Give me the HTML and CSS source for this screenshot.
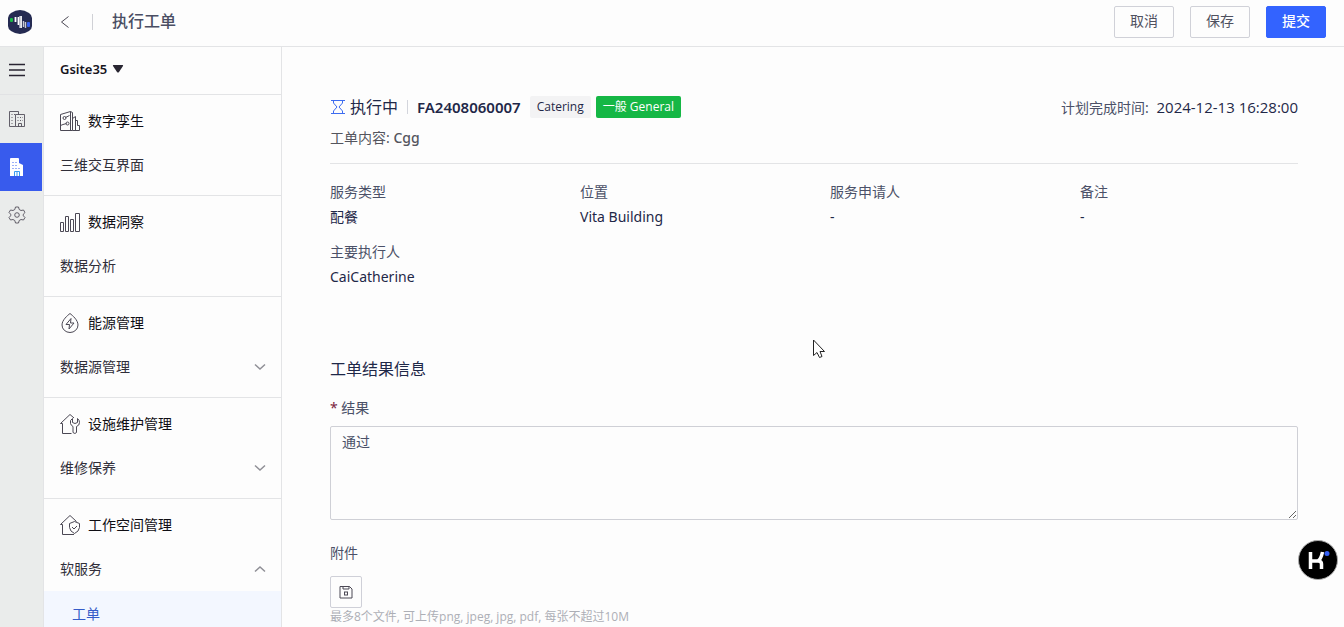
FILE: index.html
```
<!DOCTYPE html>
<html lang="zh-CN">
<head>
  <meta charset="UTF-8" />
  <meta name="viewport" content="width=device-width, initial-scale=1.0" />
  <title>执行工单</title>
  <link rel="stylesheet" href="styles.css">
</head>
<body>
  <header class="topbar">
    <svg class="logo" width="24" height="24" viewBox="0 0 24 24">
      <path d="M3 3Q12-3 21 3Q24 5 24 8V16Q24 19 21 21Q12 27 3 21Q0 19 0 16V8Q0 5 3 3Z" fill="#252b52" />
      <rect x="2" y="8" width="3" height="4" rx="1" fill="#16b845" />
      <path d="M7.500 7V12M10.500 7V15M13 6V18" stroke="#fff" stroke-width="1.800" />
      <path d="M12 6V18M15.500 11V17M17.500 12V18" stroke="#c9cbd6" stroke-width="1.400" />
      <rect x="19" y="12" width="3" height="5" rx="1" fill="#3560f5" />
    </svg>
    <button class="back" type="button" aria-label="返回">
      <svg width="10" height="14" viewBox="0 0 10 14"><path d="M8.500 1.500L1.500 7L8.500 12.500" /></svg>
    </button>
    <h1>执行工单</h1>
    <div class="actions">
      <button class="btn" type="button">取消</button>
      <button class="btn" type="button">保存</button>
      <button class="btn btn-primary" type="submit" form="resultForm">提交</button>
    </div>
  </header>

  <div class="layout">
    <nav class="rail">
      <button class="rail-item rail-menu" type="button" aria-label="菜单">
        <svg width="18" height="14" viewBox="0 0 18 14"><path d="M1 1.500H17M1 7H17M1 12.500H17" stroke="#292432" stroke-width="1.400" /></svg>
      </button>
      <a class="rail-item" href="#" aria-label="园区">
        <svg width="18" height="18" viewBox="0 0 18 18" stroke-opacity=".85">
          <path d="M7.500 16.500H1.500V1.500H10.500V4.500M7.500 16.500V4.500H16.500V16.500ZM10.500 16.500V13.500H13.500V16.500" />
          <path d="M3.500 4.500H8M3.500 7.500H6M3.500 10.500H6M3.500 13.500H6M9.500 7.500H15M9.500 10.500H15" stroke-dasharray="1 1.500" />
        </svg>
      </a>
      <a class="rail-item active" href="#" aria-label="楼宇">
        <svg width="18" height="20" viewBox="0 0 18 20">
          <path d="M2 19V2Q2 1 3 1H10Q11 1 11 2V6L15 8V19Z" fill="#fff" stroke="none" />
          <path d="M4.500 5.500H9M4.500 8.500H9M4.500 11.500H13" stroke="#3a62f0" stroke-dasharray="1 2" />
          <path d="M6.500 19V14.500H11.500V19M9 14.500V19" stroke="#3a9bf0" />
        </svg>
      </a>
      <a class="rail-item" href="#" aria-label="设置">
        <svg width="18" height="18" viewBox="0 0 18 18" stroke-opacity=".85">
          <path d="M7.500 1H10.500L11.200 3.500L13 4.500L15.500 4L17 6.500L15.300 8.200V9.800L17 11.500L15.500 14L13 13.500L11.200 14.500L10.500 17H7.500L6.800 14.500L5 13.500L2.500 14L1 11.500L2.700 9.800V8.200L1 6.500L2.500 4L5 4.500L6.800 3.500Z" stroke-linejoin="round" />
          <circle cx="9" cy="9" r="2.300" />
        </svg>
      </a>
    </nav>

    <aside class="sidebar">
      <button class="site" type="button">Gsite35
        <svg width="12" height="10" viewBox="0 0 12 10"><path d="M1.500 1H10.500Q11.500 1 11 2L7 8Q6 9 5 8L1 2Q.5 1 1.500 1Z" /></svg>
      </button>

      <section class="group">
        <h2>
          <svg width="20" height="20" viewBox="0 0 20 20">
            <path d="M.5 19.500V3.500L10.500 .5L12.500 1.500V19.500ZM10.500 .5V19M12.500 7.500L15.500 5.500V19.500M15.500 9.500H17.500V14.500H19.500V19.500H12.500" />
            <path d="M5.500 6.500L9.500 4.500M.5 14.500L3 13.500L6.500 12.500" />
            <circle cx="4.500" cy="7" r="1.500" /><circle cx="7.500" cy="12.500" r="1.500" />
          </svg>
          数字孪生
        </h2>
        <a class="item" href="#">三维交互界面</a>
      </section>

      <section class="group">
        <h2>
          <svg width="20" height="20" viewBox="0 0 20 20">
            <path d="M.5 10.500H3.500V19.500H.5ZM5.500 4.500H8.500V19.500H5.500ZM10.500 7.500H13.500V19.500H10.500ZM15.500 1.500H19.500V19.500H15.500Z" />
          </svg>
          数据洞察
        </h2>
        <a class="item" href="#">数据分析</a>
      </section>

      <section class="group">
        <h2>
          <svg width="20" height="20" viewBox="0 0 20 20">
            <path d="M10 .5C12.500 2.500 18 7 18 12A8 7.500 0 0 1 2 12C2 7 7.500 2.500 10 .5Z" />
            <path d="M11 5.500L6 11.500H9.500L9 16L14 10H10.500Z" />
          </svg>
          能源管理
        </h2>
        <a class="item" href="#">数据源管理
          <svg width="12" height="8" viewBox="0 0 12 8"><path d="M1 1.500L6 6L11 1.500" /></svg>
        </a>
      </section>

      <section class="group">
        <h2>
          <svg width="20" height="20" viewBox="0 0 20 20">
            <path d="M11.500 19.500H2.500V9.500H.5L10 .5L14 4" />
            <path d="M12.500 4.500Q9.500 6 10.500 9.500Q11 11.500 13 12.500V18.500Q15 20.500 16.500 18.500V12.500Q19.500 11.500 19.500 8.500Q19.500 6 17.500 4.500V8.500L15 9.500L12.500 8.500Z" />
          </svg>
          设施维护管理
        </h2>
        <a class="item" href="#">维修保养
          <svg width="12" height="8" viewBox="0 0 12 8"><path d="M1 1.500L6 6L11 1.500" /></svg>
        </a>
      </section>

      <section class="group">
        <h2>
          <svg width="20" height="20" viewBox="0 0 20 20">
            <path d="M14 19.500H2.500V9.500H.5L10 .5L16.500 6.500" />
            <path d="M14.500 6.500L19.500 8.500V12.500Q19 16.500 14.500 18.500Q10 16.500 9.500 12.500V8.500Z" />
            <path d="M12 12L14 14L17 11" />
          </svg>
          工作空间管理
        </h2>
        <a class="item" href="#">软服务
          <svg width="12" height="8" viewBox="0 0 12 8"><path d="M1 6.500L6 2L11 6.500" /></svg>
        </a>
        <a class="subitem" href="#">工单</a>
      </section>
    </aside>

    <main class="content">
      <div class="order-head">
        <svg width="16" height="16" viewBox="0 0 16 16"><path d="M1 1.500H15M1 14.500H15M3.500 1.500V4L7 8L3.500 12V14.500M12.500 1.500V4L9 8L12.500 12V14.500" /></svg>
        <span class="status">执行中</span>
        <span class="order-no">FA2408060007</span>
        <span class="tag">Catering</span>
        <span class="tag tag-green">一般 General</span>
        <p class="deadline">计划完成时间: <time datetime="2024-12-13T16:28:00">2024-12-13 16:28:00</time></p>
      </div>
      <p class="summary">工单内容: <span>Cgg</span></p>

      <dl class="details">
        <div><dt>服务类型</dt><dd>配餐</dd></div>
        <div><dt>位置</dt><dd>Vita Building</dd></div>
        <div><dt>服务申请人</dt><dd>-</dd></div>
        <div><dt>备注</dt><dd>-</dd></div>
        <div><dt>主要执行人</dt><dd>CaiCatherine</dd></div>
      </dl>

      <form id="resultForm">
        <h3>工单结果信息</h3>
        <label for="result"><span class="required">*</span> 结果</label>
        <textarea id="result" name="result" required>通过</textarea>
        <label for="upload">附件</label>
        <button class="upload" id="upload" type="button" aria-label="上传附件">
          <svg width="14" height="14" viewBox="0 0 14 14"><path d="M1 1.500H10.500L13 4V13H1ZM4 1.500V4H10V1.500" /><rect x="5.500" y="7" width="3" height="3" /></svg>
        </button>
        <p class="hint">最多8个文件, 可上传png, jpeg, jpg, pdf, 每张不超过10M</p>
      </form>
    </main>
  </div>

  <button class="assistant" type="button" aria-label="助手">
    <svg width="40" height="40" viewBox="0 0 40 40">
      <circle cx="20" cy="20" r="19.500" fill="#000" stroke="#aaa" />
      <path d="M12.500 12V29M12.500 21H20Q23.500 21 23.500 24V29M20 21Q23 19 24.500 12" fill="none" stroke="#fff" stroke-width="3.500" />
      <circle cx="29" cy="13.500" r="2.500" fill="#3560f5" stroke="none" />
    </svg>
  </button>
  <svg class="cursor" width="14" height="20" viewBox="0 0 14 20"><path d="M1.500 1V16.500L5 13.500L7.500 18.500L10 17.500L8 12.500H12.500Z" fill="#fff" stroke="#222" /></svg>
</body>
</html>
```
FILE: styles.css
```
* {
  box-sizing: border-box;
}

body {
  margin: 0;
  height: 100vh;
  display: flex;
  flex-direction: column;
  overflow: hidden;
  background: #fdfdfd;
  color: #1f2848;
  font-family: "Noto Sans", "Noto Sans CJK SC", sans-serif;
  font-size: 14px;
  line-height: 22px;
}

h1, h2, h3, p, dl, dd {
  margin: 0;
  font-weight: 400;
}

a {
  color: inherit;
  text-decoration: none;
}

button {
  padding: 0;
  border: none;
  background: none;
  color: inherit;
  font: inherit;
  cursor: pointer;
}

svg {
  flex: none;
  fill: none;
  stroke: #4b4854;
}

/* top bar */
.topbar {
  flex: none;
  display: flex;
  align-items: center;
  height: 47px;
  padding: 0 18px 3px 8px;
  border-bottom: 1px solid #e3e4e6;
}

.logo {
  stroke: none;
}

.back {
  display: flex;
  padding: 1px 22px 1px 28px;
  border-right: 1px solid #d0d1d6;
}

.topbar h1 {
  margin-left: 19px;
  padding-bottom: 2px;
  color: #4a4e63;
  font-size: 16px;
  font-weight: 500;
}

.actions {
  display: flex;
  gap: 16px;
  margin-left: auto;
}

.btn {
  width: 60px;
  height: 32px;
  padding-bottom: 2px;
  border: 1px solid #d0d1d8;
  border-radius: 2px;
  color: #4f5160;
}

.btn-primary {
  border-color: #3363ff;
  background: #3363ff;
  color: #fff;
  font-weight: 500;
}

.layout {
  flex: 1;
  display: flex;
  min-height: 0;
}

/* icon rail */
.rail {
  flex: none;
  width: 44px;
  border-right: 1px solid #e3e4e6;
  background: #eaeceb;
}

.rail-item {
  display: flex;
  align-items: center;
  width: 42px;
  height: 48px;
  padding-left: 8px;
}

.rail-menu {
  width: 100%;
  padding-bottom: 1px;
  border-bottom: 1px solid #e1e2e4;
}

.rail-item.active {
  background: #385bed;
}

/* side menu */
.sidebar {
  flex: none;
  width: 238px;
  overflow: hidden;
  border-right: 1px solid #e3e4e6;
}

.site {
  display: flex;
  align-items: center;
  gap: 5px;
  width: 100%;
  height: 48px;
  padding: 0 16px 3px;
  border-bottom: 1px solid #e3e4e6;
  color: #17151d;
  font-size: 13px;
  font-weight: 600;
}

.site svg {
  fill: #292632;
  stroke: none;
}

.group {
  padding: 4px 0 8px;
  border-bottom: 1px solid #e3e4e6;
}

.group h2 {
  display: flex;
  align-items: center;
  gap: 8px;
  height: 44px;
  padding-left: 16px;
  color: #0f0e14;
  font-size: 14px;
}

.item {
  display: flex;
  align-items: center;
  justify-content: space-between;
  height: 44px;
  padding: 0 15px 0 16px;
  color: #302e39;
}

.item svg {
  stroke: #8f8f96;
  stroke-width: 1.5;
}

.subitem {
  display: flex;
  align-items: center;
  height: 46px;
  padding-left: 28px;
  background: #f3f7ff;
  color: #355cc9;
}

/* work order */
.content {
  flex: 1;
  min-width: 0;
  padding: 46px 46px 0 48px;
}

.order-head {
  display: flex;
  align-items: center;
  height: 28px;
}

.order-head svg {
  margin-right: 4px;
  stroke: #3d6cf0;
}

.status {
  font-size: 16px;
}

.order-no {
  margin: 0 9px;
  padding-left: 9px;
  border-left: 1px solid #d3d5dc;
  font-size: 15px;
  line-height: 14px;
  font-weight: 600;
}

.tag {
  margin-right: 5px;
  padding: 0 7px;
  border-radius: 2px;
  background: #f3f3f4;
  font-family: "Open Sans", "Noto Sans CJK SC", sans-serif;
  font-size: 12px;
}

.tag-green {
  background: #15b745;
  color: #fff;
}

.deadline {
  margin-left: auto;
  color: #4b5168;
}

.deadline time {
  margin-left: 4px;
  color: #1f2848;
  font-family: "Open Sans", sans-serif;
  font-size: 15px;
}

.summary {
  padding: 6px 0 14px;
  border-bottom: 1px solid #e3e4e6;
  color: #54555d;
}

.summary span {
  font-weight: 500;
}

.details {
  display: grid;
  grid-template-columns: repeat(4, 1fr);
  gap: 10px 32px;
  padding-top: 16px;
}

.details dt {
  height: 25px;
  line-height: 24px;
  color: #4b5168;
}

.details dd {
  height: 25px;
  line-height: 24px;
}

form {
  padding-top: 67px;
}

form h3 {
  font-size: 16px;
  line-height: 24px;
}

form label {
  display: block;
  margin: 16px 0 7px;
  color: #4b5168;
}

.required {
  color: #7a2440;
}

textarea {
  display: block;
  width: 100%;
  height: 94px;
  padding: 4px 11px;
  border: 1px solid #cfd0d6;
  border-radius: 2px;
  background: transparent;
  color: #4b5168;
  font: inherit;
  resize: vertical;
}

textarea + label {
  margin-top: 22px;
  margin-bottom: 12px;
}

.upload {
  display: flex;
  align-items: center;
  justify-content: center;
  width: 32px;
  height: 32px;
  border: 1px solid #cfd0d8;
  border-radius: 2px;
}

.hint {
  color: #adafb6;
  font-family: "Open Sans", "Noto Sans CJK SC", sans-serif;
  font-size: 12px;
  line-height: 18px;
}

/* floating parts */
.assistant {
  position: fixed;
  right: 6px;
  bottom: 47px;
  height: 40px;
}

.assistant svg {
  display: block;
}

.cursor {
  position: fixed;
  left: 812px;
  top: 339px;
  pointer-events: none;
}
```
